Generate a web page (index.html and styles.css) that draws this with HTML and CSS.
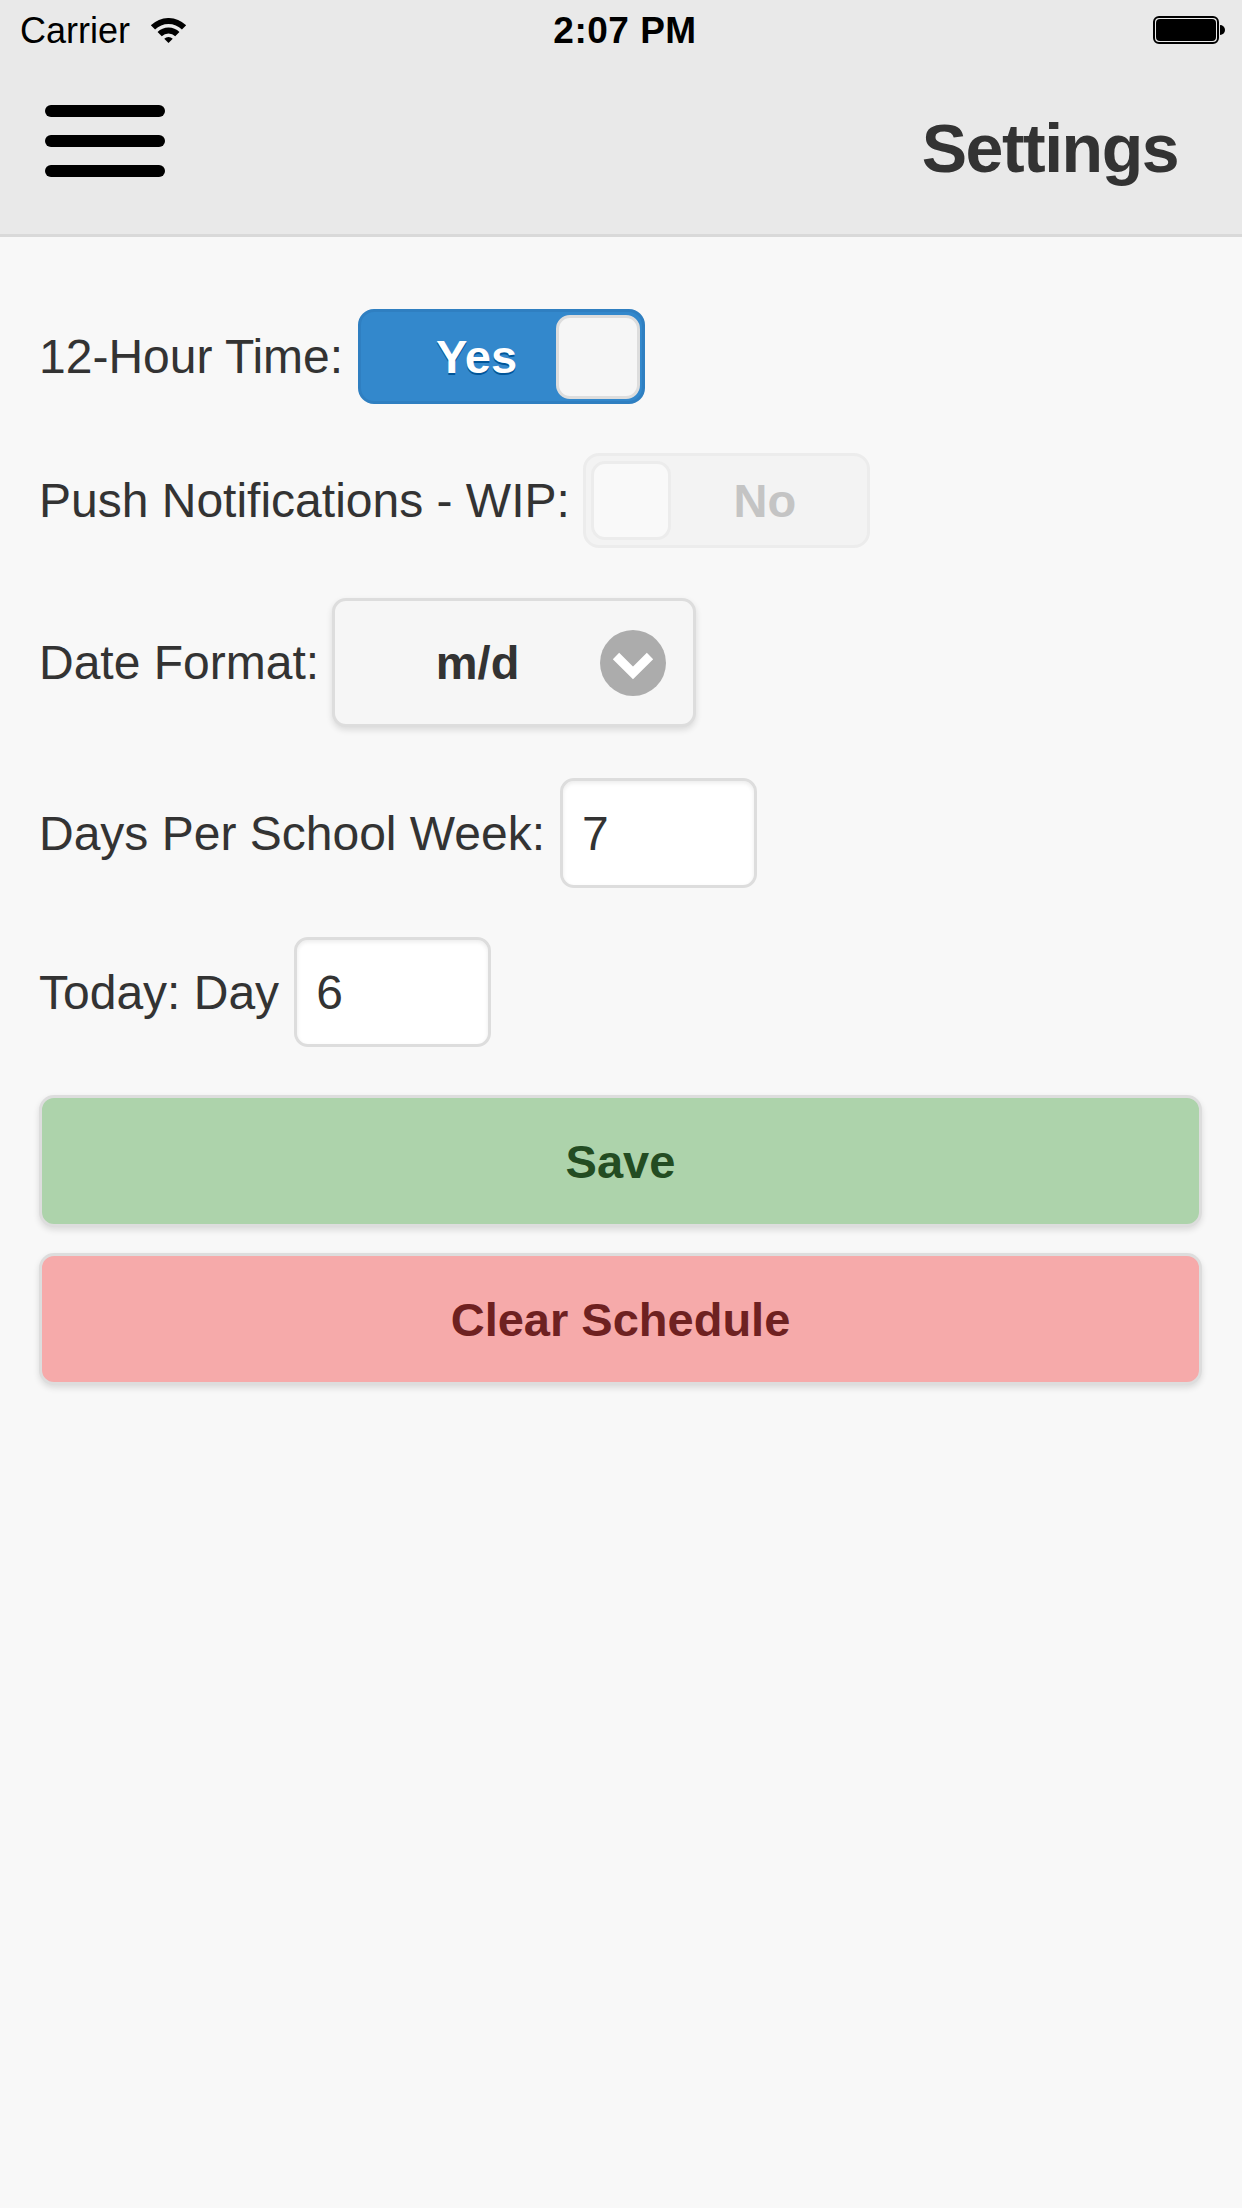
FILE: index.html
```html
<!DOCTYPE html>
<html>
<head>
<meta charset="utf-8">
<link rel="stylesheet" href="styles.css">
</head>
<body>
<header class="header">
  <div class="statusbar">
    <div class="sb-left">
      <span class="carrier">Carrier</span>
      <svg class="wifi" viewBox="0 0 37 25" width="37" height="25">
        <path d="M0.82 7.32 A25 25 0 0 1 36.18 7.32 L31.93 11.57 A19 19 0 0 0 5.07 11.57 Z" fill="#000"/>
        <path d="M7.54 14.04 A15.5 15.5 0 0 1 29.46 14.04 L25.22 18.28 A9.5 9.5 0 0 0 11.78 18.28 Z" fill="#000"/>
        <path d="M14.26 20.76 A6 6 0 0 1 22.74 20.76 L18.5 25 Z" fill="#000"/>
      </svg>
    </div>
    <div class="sb-time">2:07 PM</div>
    <div class="sb-right">
      <div class="battery"><div class="battery-fill"></div></div>
      <div class="battery-nub"></div>
    </div>
  </div>
  <div class="navbar">
    <div class="hamburger">
      <span></span><span></span><span></span>
    </div>
    <h1 class="title">Settings</h1>
  </div>
</header>

<main class="content">
  <div class="row row-1">
    <span class="label">12-Hour Time:</span>
    <div class="flip flip-on">
      <span class="flip-text">Yes</span>
      <span class="knob"></span>
    </div>
  </div>

  <div class="row row-2">
    <span class="label">Push Notifications - WIP:</span>
    <div class="flip flip-off">
      <span class="knob"></span>
      <span class="flip-text">No</span>
    </div>
  </div>

  <div class="row row-3">
    <span class="label">Date Format:</span>
    <div class="select">
      <span class="select-text">m/d</span>
      <svg class="select-icon" viewBox="0 0 66 66" width="66" height="66">
        <circle cx="33" cy="33" r="33" fill="#acacac"/>
        <polyline points="16,26 33,43 50,26" fill="none" stroke="#fff" stroke-width="9"/>
      </svg>
    </div>
  </div>

  <div class="row row-4">
    <span class="label">Days Per School Week:</span>
    <div class="input">7</div>
  </div>

  <div class="row row-5">
    <span class="label">Today: Day</span>
    <div class="input">6</div>
  </div>

  <button class="btn btn-save">Save</button>
  <button class="btn btn-clear">Clear Schedule</button>
</main>
</body>
</html>
```

FILE: styles.css
```css
html, body {
  margin: 0;
  padding: 0;
}
body {
  background: #f8f8f8;
  font-family: "Liberation Sans", Arial, sans-serif;
  color: #333;
  width: 1242px;
  min-height: 2208px;
}

.header {
  background: #e9e9e9;
  border-bottom: 3px solid #d9d9d9;
}

.statusbar {
  height: 60px;
  display: flex;
  align-items: center;
  justify-content: space-between;
  padding: 0 17px 0 20px;
  position: relative;
  color: #000;
}
.sb-left {
  display: flex;
  align-items: center;
  gap: 20px;
  padding-top: 2px;
}
.carrier {
  font-size: 36px;
  line-height: 60px;
}
.wifi {
  display: block;
  margin-top: -2px;
}
.sb-time {
  position: absolute;
  left: 0;
  right: 0;
  text-align: center;
  font-size: 37px;
  font-weight: 600;
  line-height: 60px;
  padding-top: 2px;
  padding-left: 8px;
  letter-spacing: 0.5px;
  pointer-events: none;
}
.sb-right {
  display: flex;
  align-items: center;
  gap: 1px;
}
.battery {
  border: 2px solid #000;
  border-radius: 6px;
  padding: 1px;
  box-sizing: content-box;
  width: 60px;
  height: 22px;
  background: #e9e9e9;
}
.battery-fill {
  width: 100%;
  height: 100%;
  background: #000;
  border-radius: 4px;
}
.battery-nub {
  width: 5px;
  height: 10px;
  background: #000;
  border-radius: 0 5px 5px 0;
}

.navbar {
  height: 174px;
  display: flex;
  align-items: center;
  justify-content: space-between;
  padding: 0 64px 0 45px;
}
.hamburger {
  display: flex;
  flex-direction: column;
  gap: 18px;
  margin-bottom: 12px;
}
.hamburger span {
  display: block;
  width: 120px;
  height: 12px;
  background: #000;
  border-radius: 6px;
}
.title {
  margin: 0;
  font-size: 68px;
  font-weight: bold;
  letter-spacing: -1.5px;
  color: #333;
  line-height: 1;
  padding-top: 2px;
}

.content {
  padding: 72px 40px 0 39px;
}

.row {
  display: flex;
  align-items: center;
  gap: 15px;
  margin-bottom: 49px;
}
.row-2 { margin-bottom: 50px; }
.row-3 { margin-bottom: 51px; }
.row-5 { margin-bottom: 48px; }

.label {
  font-size: 48px;
  color: #333;
  text-shadow: 0 1px 0 #f3f3f3;
  white-space: nowrap;
}

.flip {
  width: 287px;
  height: 95px;
  box-sizing: border-box;
  border-radius: 16px;
  border: 3px solid;
  display: flex;
  align-items: center;
  padding: 0 2px;
}
.flip-on {
  background: #3388cc;
  border-color: #2f7fc1;
}
.flip-off {
  background: #f3f3f3;
  border-color: #ececec;
  margin-left: -2px;
}
.flip-text {
  flex: 1;
  text-align: center;
  font-size: 47px;
  font-weight: bold;
}
.flip-on .flip-text {
  color: #fff;
  text-shadow: 0 2px 0 #005599;
  padding-left: 34px;
}
.flip-off .flip-text {
  color: #c4c4c4;
  padding-right: 6px;
}
.knob {
  width: 84px;
  height: 84px;
  box-sizing: border-box;
  border-radius: 14px;
  background: #f6f6f6;
  border: 3px solid #dddddd;
}
.flip-off .knob {
  width: 80px;
  height: 79px;
  background: #f9f9f9;
  border-color: #ececec;
  margin-left: 3px;
}

.select {
  width: 364px;
  height: 129px;
  box-sizing: border-box;
  background: #f6f6f6;
  border: 3px solid #dddddd;
  border-radius: 14px;
  box-shadow: 0 3px 6px rgba(0,0,0,0.12);
  display: flex;
  align-items: center;
  padding: 0 27px 0 20px;
  margin-left: -2px;
}
.select-text {
  flex: 1;
  text-align: center;
  font-size: 47px;
  font-weight: bold;
  color: #333;
}
.select-icon {
  display: block;
}

.input {
  width: 197px;
  height: 110px;
  box-sizing: border-box;
  background: #fff;
  border: 3px solid #dddddd;
  border-radius: 14px;
  box-shadow: inset 0 2px 4px rgba(0,0,0,0.08);
  display: flex;
  align-items: center;
  padding-left: 19px;
  font-size: 48px;
  color: #333;
}

.btn {
  display: block;
  width: 100%;
  height: 132px;
  box-sizing: border-box;
  border: 3px solid #dddddd;
  border-radius: 15px;
  box-shadow: 0 3px 6px rgba(0,0,0,0.12);
  font-family: "Liberation Sans", Arial, sans-serif;
  font-size: 47px;
  font-weight: bold;
  margin: 0 0 26px 0;
  padding: 0;
}
.btn-save {
  background: #add3ab;
  color: #234c22;
}
.btn-clear {
  background: #f6aaaa;
  color: #6e2121;
}
```
